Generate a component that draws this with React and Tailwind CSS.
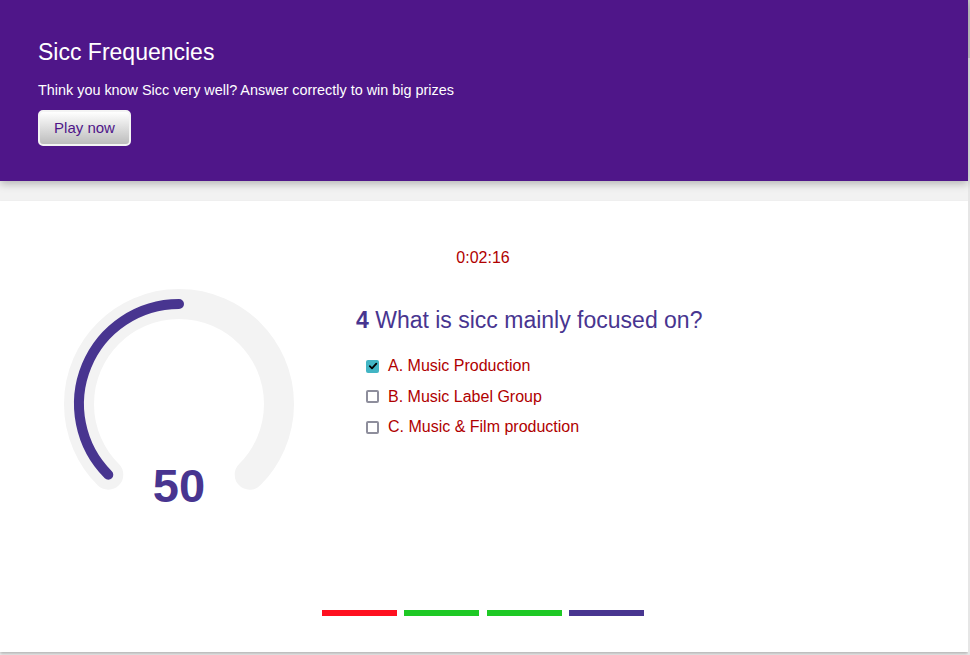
import React from "react";

const options = [
  { label: "A. Music Production", checked: true },
  { label: "B. Music Label Group", checked: false },
  { label: "C. Music & Film production", checked: false },
];

const bars = ["bg-[#ff1020]", "bg-[#1ec925]", "bg-[#1ec925]", "bg-[#483590]"];

function Gauge() {
  return (
    <svg width="240" height="232" viewBox="0 0 240 232" className="shrink-0">
      <path
        d="M 49.29 195.71 A 100 100 0 1 1 190.71 195.71"
        fill="none"
        stroke="#f3f3f3"
        strokeWidth="30"
        strokeLinecap="round"
      />
      <path
        d="M 49.29 195.71 A 100 100 0 0 1 120 25"
        fill="none"
        stroke="#483590"
        strokeWidth="10"
        strokeLinecap="round"
      />
      <text
        x="120"
        y="223"
        textAnchor="middle"
        fill="#483590"
        fontSize="47"
        fontWeight="700"
        fontFamily="'Liberation Sans', Arial, sans-serif"
      >
        50
      </text>
    </svg>
  );
}

function App() {
  return (
    <div className="flex h-[655px] overflow-hidden bg-[#f2f2f2] font-['Liberation_Sans',Arial,sans-serif]">
      <div className="w-[968px] shrink-0">
        {/* header */}
        <div className="relative z-10 h-[181px] bg-[#4f1689] pl-[38px] pt-[39px] text-white shadow-[0_3px_8px_rgba(0,0,0,0.25)]">
          <h1 className="text-[23px] leading-[26px]">Sicc Frequencies</h1>
          <p className="mt-[16px] text-[14.4px] leading-[18px]">
            Think you know Sicc very well? Answer correctly to win big prizes
          </p>
          <button className="mt-[11px] h-[36px] w-[93px] rounded-[5px] border-2 border-[#f4f4f4] bg-gradient-to-b from-white to-[#bdbdbd] text-[15px] text-[#4f1689]">
            Play now
          </button>
        </div>

        {/* quiz card */}
        <div className="mt-[20px] h-[451px] bg-white pr-[2px] pt-[48px] shadow-[0_2px_3px_rgba(0,0,0,0.25)]">
          <p className="text-center text-[16px] leading-[18px] text-[#b00000]">0:02:16</p>

          <div className="mt-[12px] flex pl-[59px]">
            <Gauge />
            <div className="ml-[57px] pt-[28px]">
              <h2 className="text-[23px] leading-[26px] text-[#483590]">
                <span className="font-bold">4</span> What is sicc mainly focused on?
              </h2>
              <div className="mt-[18px] pl-[10px]">
                {options.map((o) => (
                  <label key={o.label} className="flex h-[30.5px] items-center gap-[9px]">
                    {o.checked ? (
                      <span className="flex h-[13px] w-[13px] items-center justify-center rounded-[2px] bg-[#42b5c4]">
                        <svg width="10" height="10" viewBox="0 0 10 10">
                          <path
                            d="M1.8 5.2 L4 7.3 L8.3 2.6"
                            fill="none"
                            stroke="#000"
                            strokeWidth="1.8"
                            strokeLinecap="round"
                            strokeLinejoin="round"
                          />
                        </svg>
                      </span>
                    ) : (
                      <span className="h-[13px] w-[13px] rounded-[2px] border-2 border-[#8e8e9c] bg-white" />
                    )}
                    <span className="text-[16px] text-[#b00000]">{o.label}</span>
                  </label>
                ))}
              </div>
            </div>
          </div>

          <div className="mt-[99px] flex justify-center gap-[7.33px]">
            {bars.map((b, i) => (
              <div key={i} className={`h-[6px] w-[75px] ${b}`} />
            ))}
          </div>
        </div>
      </div>

      {/* scrollbar strip */}
      <div className="flex w-[2px] flex-col bg-[#e6e6e6]">
        <div className="h-[58px] bg-[#c9c9c9]" />
      </div>
    </div>
  );
}

export default App;
